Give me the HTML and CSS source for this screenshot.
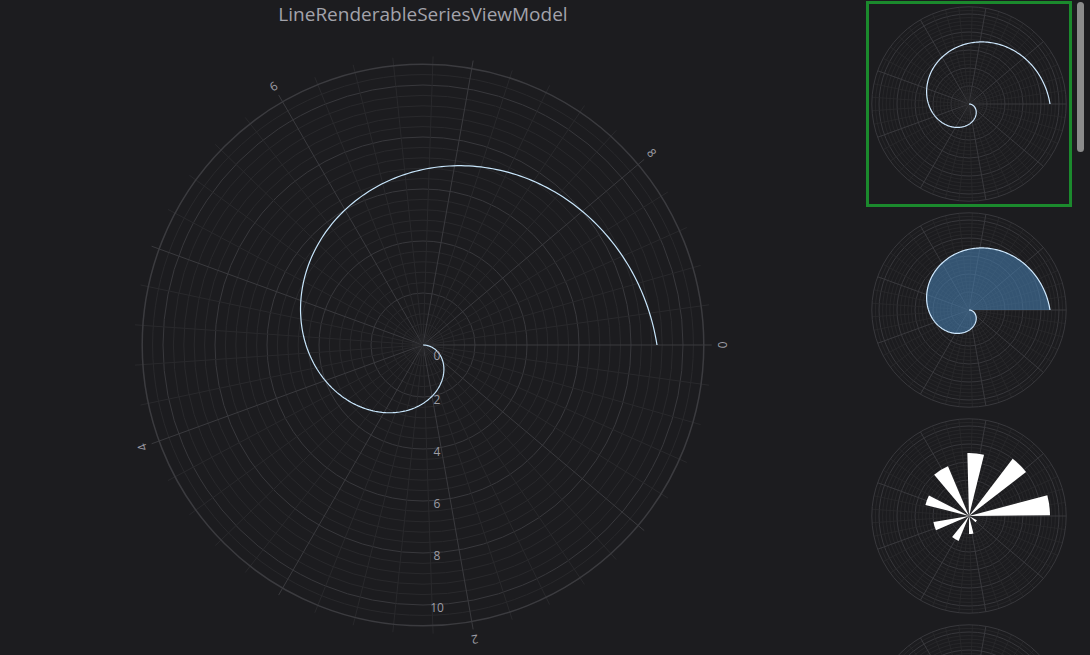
FILE: index.html
```html
<!DOCTYPE html>
<html lang="en">
<head>
<meta charset="utf-8">
<title>Polar series</title>
<link rel="stylesheet" href="styles.css">
</head>
<body>
<div class="app">
  <main class="chart-pane">
    <h1 class="chart-title">LineRenderableSeriesViewModel</h1>
    <svg id="main-chart" class="main-chart" width="846" height="627" viewBox="0 0 846 627"></svg>
  </main>
  <aside class="gallery">
    <div class="gallery-list">
      <div class="thumb selected"><svg class="thumb-svg" data-kind="line" width="200" height="200" viewBox="0 0 200 200"></svg></div>
      <div class="thumb"><svg class="thumb-svg" data-kind="area" width="200" height="200" viewBox="0 0 200 200"></svg></div>
      <div class="thumb"><svg class="thumb-svg" data-kind="column" width="200" height="200" viewBox="0 0 200 200"></svg></div>
      <div class="thumb"><svg class="thumb-svg" data-kind="empty" width="200" height="200" viewBox="0 0 200 200"></svg></div>
    </div>
    <div class="scrollbar"><div class="scroll-thumb"></div></div>
  </aside>
</div>
<script src="charts.js"></script>
</body>
</html>
```

FILE: styles.css
```css
html, body {
  margin: 0;
  padding: 0;
  background: #1c1c1f;
  overflow: hidden;
}

.app {
  display: flex;
  width: 1090px;
  height: 655px;
  overflow: hidden;
}

.chart-pane {
  width: 846px;
  flex: none;
  display: flex;
  flex-direction: column;
  align-items: center;
}

.chart-title {
  margin: 0;
  height: 28px;
  line-height: 28px;
  font-family: "Open Sans", "Noto Sans", sans-serif;
  font-weight: 400;
  font-size: 19px;
  color: #a3a3ab;
}

.main-chart {
  display: block;
}

.gallery {
  flex: 1;
  display: flex;
  padding-left: 20px;
  min-width: 0;
}

.gallery-list {
  width: 206px;
  flex: none;
  padding-top: 1px;
  display: flex;
  flex-direction: column;
}

.thumb {
  width: 206px;
  height: 206px;
  flex: none;
  box-sizing: border-box;
  border: 3px solid transparent;
}

.thumb.selected {
  border-color: #1b8a2d;
}

.thumb-svg {
  display: block;
}

.scrollbar {
  margin-left: 5px;
  width: 7px;
  padding-top: 2px;
}

.scroll-thumb {
  height: 150px;
  border-radius: 4px;
  background: #8b8b8b;
}

.axis-label {
  font-family: "Open Sans", "Noto Sans", sans-serif;
  font-size: 12px;
  fill: #9d9da5;
}
```

FILE: charts.js
```js
(function () {
  var NS = 'http://www.w3.org/2000/svg';
  var RMAX = 10.8;

  function el(parent, tag, attrs) {
    var e = document.createElementNS(NS, tag);
    for (var k in attrs) e.setAttribute(k, attrs[k]);
    parent.appendChild(e);
    return e;
  }

  function pt(cx, cy, r, deg) {
    var a = deg * Math.PI / 180;
    return [cx + r * Math.cos(a), cy + r * Math.sin(a)];
  }

  function drawGrid(svg, cx, cy, unit, s) {
    var g = el(svg, 'g', { fill: 'none' });
    var R = RMAX * unit;
    for (var k = 1; k * 0.4 < RMAX - 0.05; k++) {
      var major = k % 5 === 0;
      el(g, 'circle', {
        cx: cx, cy: cy, r: (k * 0.4 * unit).toFixed(2),
        stroke: major ? s.major : s.minor,
        'stroke-width': major ? s.majorW : s.minorW
      });
    }
    var ext = R + s.ext;
    for (var i = 0; i < 45; i++) {
      var majorA = i % 5 === 0;
      var p = pt(cx, cy, ext, i * 8);
      el(g, 'line', {
        x1: cx, y1: cy, x2: p[0].toFixed(2), y2: p[1].toFixed(2),
        stroke: majorA ? s.spoke : s.minor,
        'stroke-width': majorA ? s.spokeW : s.minorW
      });
    }
    el(g, 'circle', { cx: cx, cy: cy, r: R.toFixed(2), stroke: s.outer, 'stroke-width': s.outerW });
  }

  function spiral(cx, cy, unit) {
    var pts = [];
    for (var i = 0; i <= 300; i++) {
      var t = i * 0.03;
      var p = pt(cx, cy, t * unit, t * 40);
      pts.push(p[0].toFixed(2) + ',' + p[1].toFixed(2));
    }
    return pts.join(' ');
  }

  /* main chart */
  var main = document.getElementById('main-chart');
  var cx = 423, cy = 317, unit = 26;
  drawGrid(main, cx, cy, unit, {
    minor: '#29292c', minorW: 1,
    major: '#38383c', majorW: 1,
    spoke: '#3a3a3e', spokeW: 1,
    outer: '#3b3b3f', outerW: 1.5,
    ext: 8
  });
  el(main, 'polyline', { points: spiral(cx, cy, unit), fill: 'none', stroke: '#c8e6fc', 'stroke-width': 1.2 });

  [0, 2, 4, 6, 8].forEach(function (v) {
    var deg = v * 40;
    var p = pt(cx, cy, 299, deg);
    var t = el(main, 'text', {
      'class': 'axis-label', 'text-anchor': 'middle', 'dominant-baseline': 'central',
      transform: 'translate(' + p[0].toFixed(1) + ',' + p[1].toFixed(1) + ') rotate(' + (deg + 90) + ')'
    });
    t.textContent = String(v);
  });
  [0, 2, 4, 6, 8, 10].forEach(function (v) {
    var t = el(main, 'text', {
      'class': 'axis-label', 'text-anchor': 'middle', 'dominant-baseline': 'central',
      x: cx + 14, y: cy + v * unit + (v === 0 ? 10 : 2)
    });
    t.textContent = String(v);
  });

  /* thumbnails */
  var wedges = [
    [9, 345.2, 359.4], [8, 307.3, 322.4], [7, 268.5, 283.8], [6, 229.8, 247.1],
    [5, 194.3, 207.1], [4, 156.6, 170.6], [3, 112.6, 128.7], [2, 75.7, 90], [1, 29, 43]
  ];
  var thumbs = document.querySelectorAll('.thumb-svg');
  Array.prototype.forEach.call(thumbs, function (svg) {
    var tcx = 100, tcy = 100, tu = 9;
    drawGrid(svg, tcx, tcy, tu, {
      minor: '#29292c', minorW: 0.8,
      major: '#37373b', majorW: 1,
      spoke: '#39393d', spokeW: 1,
      outer: '#38383c', outerW: 1,
      ext: 0
    });
    var kind = svg.getAttribute('data-kind');
    if (kind === 'line') {
      el(svg, 'polyline', { points: spiral(tcx, tcy, tu), fill: 'none', stroke: '#cfe9ff', 'stroke-width': 1.2 });
    } else if (kind === 'area') {
      el(svg, 'polygon', { points: spiral(tcx, tcy, tu), fill: 'rgba(72,132,182,0.55)', stroke: 'none' });
      el(svg, 'polyline', { points: spiral(tcx, tcy, tu), fill: 'none', stroke: '#cfe9ff', 'stroke-width': 1.2 });
    } else if (kind === 'column') {
      wedges.forEach(function (w) {
        var r = w[0] * tu;
        var a = pt(tcx, tcy, r, w[1]);
        var b = pt(tcx, tcy, r, w[2]);
        el(svg, 'path', {
          d: 'M' + tcx + ',' + tcy + ' L' + a[0].toFixed(2) + ',' + a[1].toFixed(2) +
             ' A' + r + ',' + r + ' 0 0 1 ' + b[0].toFixed(2) + ',' + b[1].toFixed(2) + ' Z',
          fill: '#ffffff'
        });
      });
    }
  });
})();
```
